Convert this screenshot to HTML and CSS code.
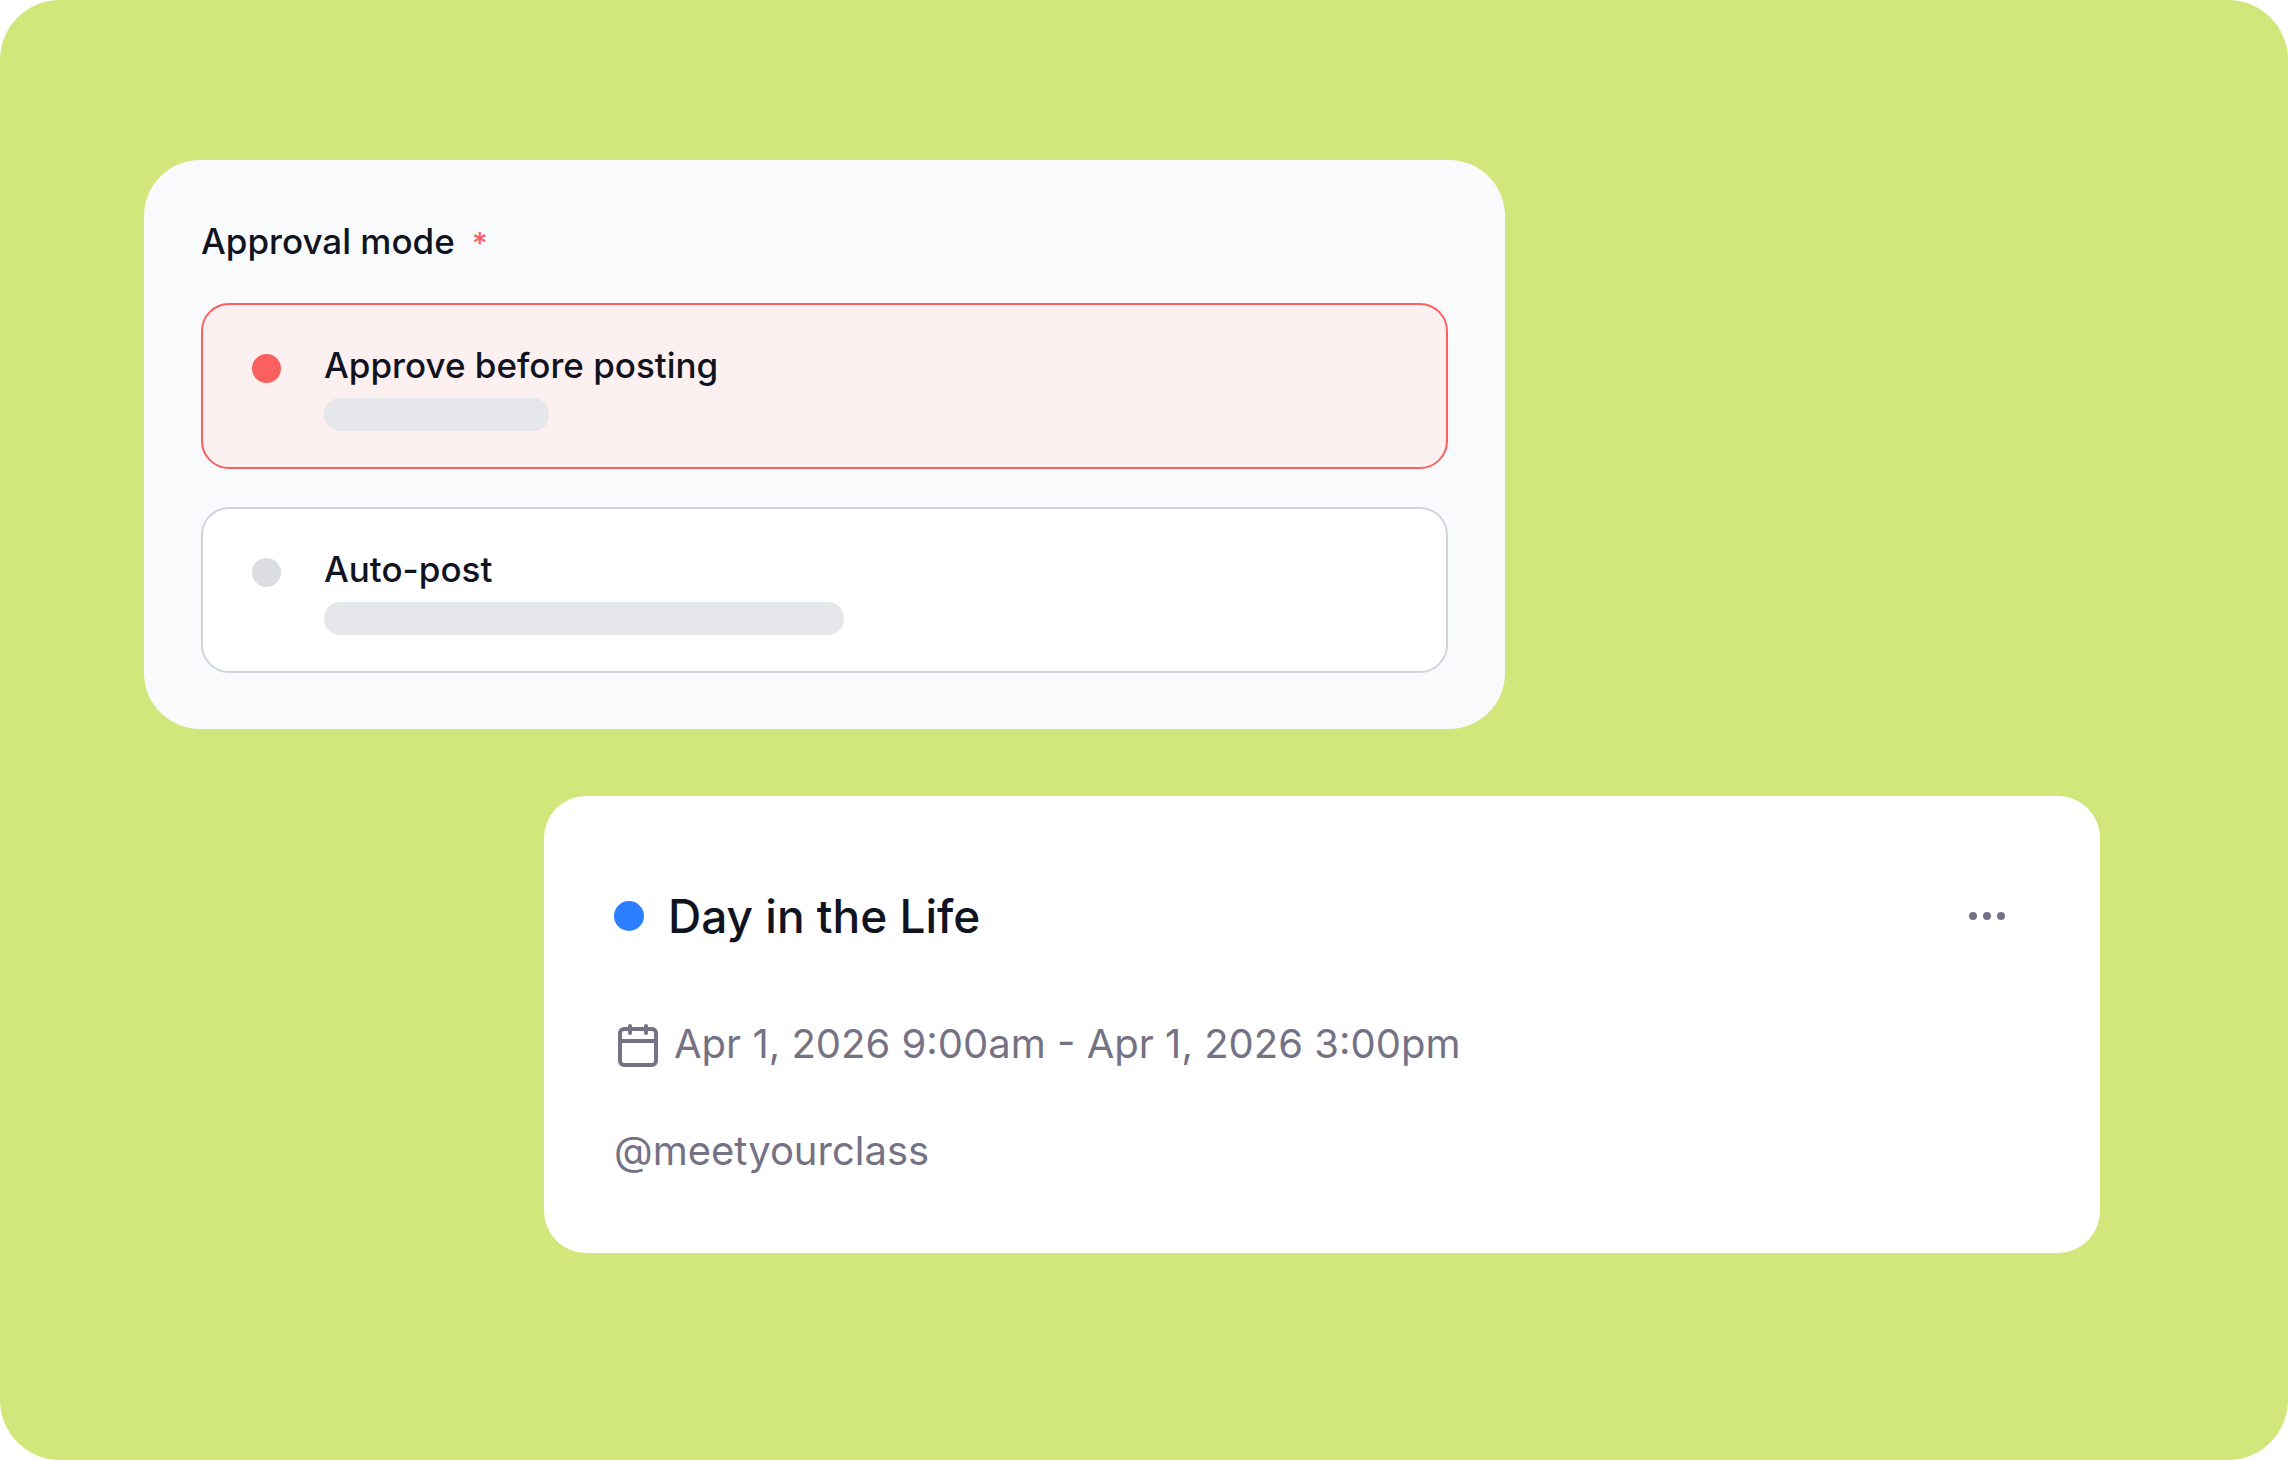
FILE: index.html
```html
<!DOCTYPE html>
<html lang="en">
<head>
<meta charset="utf-8">
<meta name="viewport" content="width=device-width, initial-scale=1">
<title>Approval mode</title>
<link rel="stylesheet" href="styles.css">
</head>
<body>
<main class="stage">
  <form class="approval">
    <fieldset class="approval-group">
      <legend class="approval-title">Approval mode <span class="required">*</span></legend>
      <div class="options">
        <label class="option">
          <input class="option-radio" type="radio" name="mode" value="approve" checked>
          <span class="option-body">
            <span class="option-name">Approve before posting</span>
            <span class="placeholder placeholder-short"></span>
          </span>
        </label>
        <label class="option">
          <input class="option-radio" type="radio" name="mode" value="auto">
          <span class="option-body">
            <span class="option-name">Auto-post</span>
            <span class="placeholder placeholder-long"></span>
          </span>
        </label>
      </div>
    </fieldset>
  </form>

  <article class="event">
    <header class="event-header">
      <span class="event-dot"></span>
      <h2 class="event-title">Day in the Life</h2>
      <button class="event-menu" type="button" aria-label="More options">
        <svg width="36" height="8" viewBox="0 0 36 8" fill="currentColor" aria-hidden="true">
          <circle cx="4" cy="4" r="4"/><circle cx="18" cy="4" r="4"/><circle cx="32" cy="4" r="4"/>
        </svg>
      </button>
    </header>
    <p class="event-date">
      <svg class="event-icon" width="48" height="48" viewBox="0 0 48 48" fill="none" stroke="currentColor" stroke-width="4" stroke-linecap="round" stroke-linejoin="round" aria-hidden="true">
        <rect x="6" y="9" width="36" height="36" rx="4"/>
        <path d="M16 6v7M32 6v7M6 21h36"/>
      </svg>
      <span>Apr 1, 2026 9:00am - Apr 1, 2026 3:00pm</span>
    </p>
    <p class="event-handle">@meetyourclass</p>
  </article>
</main>
</body>
</html>
```
FILE: styles.css
```css
* {
  box-sizing: border-box;
}

body {
  margin: 0;
  background: #fff;
  color: #101420;
  font-family: Inter, "Liberation Sans", sans-serif;
}

/* Two cards that overlap in the middle column */
.stage {
  display: grid;
  grid-template-columns: 400fr 961fr 595fr;
  align-content: start;
  row-gap: 67px;
  min-height: 100vh;
  padding: 160px 188px 160px 144px;
  border-radius: 60px;
  background: #d1e77c;
}

.approval {
  grid-column: 1 / 3;
  padding: 57px 57px 56px;
  border-radius: 56px;
  background: #f9fafc;
}

.approval-group {
  min-width: 0;
  margin: 0;
  padding: 0;
  border: 0;
}

.approval-title {
  margin-bottom: 38px;
  padding: 0;
  font-size: 35px;
  font-weight: 500;
  line-height: 48px;
}

.required {
  margin-left: 8px;
  color: #fb6061;
  font-size: 30px;
  line-height: 1;
}

.options {
  display: flex;
  flex-direction: column;
  gap: 38px;
}

.option {
  display: flex;
  gap: 43px;
  padding: 36px 48px 36px 49px;
  border: 2px solid #d1d5db;
  border-radius: 28px;
  background: #fff;
}

.option:has(:checked) {
  border-color: #fb6061;
  background: #fdf0f0;
}

.option-radio {
  appearance: none;
  flex: none;
  width: 29px;
  height: 29px;
  margin: 13px 0 0;
  border-radius: 50%;
  background: #dbdde2;
}

.option-radio:checked {
  background: #fb6061;
}

.option-body {
  display: flex;
  flex: 1;
  flex-direction: column;
  gap: 9px;
}

.option-name {
  font-size: 35px;
  font-weight: 500;
  line-height: 48px;
}

.placeholder {
  height: 33px;
  border-radius: 16px;
  background: #e5e7eb;
}

.placeholder-short {
  width: 225px;
}

.placeholder-long {
  width: 520px;
}

.event {
  grid-column: 2 / 4;
  padding: 90px 71px 76px 70px;
  border-radius: 42px;
  background: #fff;
}

.event-header {
  display: flex;
  align-items: center;
  gap: 24px;
}

.event-dot {
  width: 30px;
  height: 30px;
  border-radius: 50%;
  background: #2b7fff;
}

.event-title {
  flex: 1;
  margin: 0;
  font-size: 46px;
  font-weight: 500;
  line-height: 60px;
}

.event-menu {
  display: flex;
  align-items: center;
  justify-content: center;
  width: 84px;
  height: 60px;
  padding: 0;
  border: 0;
  background: none;
  color: #757285;
}

.event-date,
.event-handle {
  margin: 0;
  color: #757285;
  font-size: 40px;
  line-height: 52px;
}

.event-date {
  display: flex;
  align-items: center;
  gap: 12px;
  margin-top: 72px;
}

.event-icon {
  flex: none;
}

.event-handle {
  margin-top: 55px;
}
```
